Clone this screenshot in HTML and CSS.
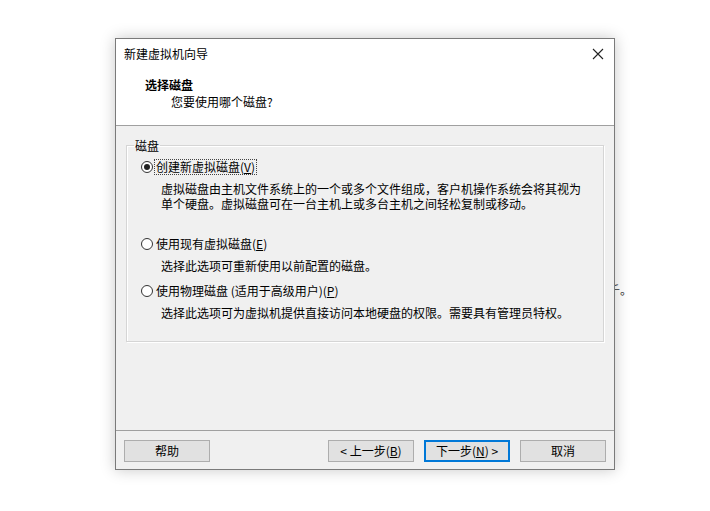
FILE: index.html
```html
<!DOCTYPE html>
<html lang="zh-CN">
<head>
<meta charset="utf-8">
<title>新建虚拟机向导</title>
<link rel="stylesheet" href="styles.css">
</head>
<body>
<div class="desktop">
  <div class="bgtext">千。</div>
  <div class="dialog">
    <div class="head">
      <div class="titlebar">
        <span class="title">新建虚拟机向导</span>
        <svg class="close" width="12" height="12" viewBox="0 0 12 12"><path d="M1 1 L11 11 M11 1 L1 11" stroke="#222" stroke-width="1.1" fill="none"/></svg>
      </div>
      <div class="heading">选择磁盘</div>
      <div class="subheading">您要使用哪个磁盘?</div>
    </div>
    <div class="body">
      <fieldset class="group">
        <legend>磁盘</legend>
        <div class="option">
          <div class="radio-row"><span class="radio checked"></span><span class="label focus">创建新虚拟磁盘(<u>V</u>)</span></div>
          <div class="desc">虚拟磁盘由主机文件系统上的一个或多个文件组成，客户机操作系统会将其视为<br>单个硬盘。虚拟磁盘可在一台主机上或多台主机之间轻松复制或移动。</div>
        </div>
        <div class="option opt2">
          <div class="radio-row"><span class="radio"></span><span class="label">使用现有虚拟磁盘(<u>E</u>)</span></div>
          <div class="desc">选择此选项可重新使用以前配置的磁盘。</div>
        </div>
        <div class="option opt3">
          <div class="radio-row"><span class="radio"></span><span class="label">使用物理磁盘 (适用于高级用户)(<u>P</u>)</span></div>
          <div class="desc">选择此选项可为虚拟机提供直接访问本地硬盘的权限。需要具有管理员特权。</div>
        </div>
      </fieldset>
    </div>
    <div class="footer">
      <button class="btn">帮助</button>
      <div class="spacer"></div>
      <button class="btn">&lt; 上一步(<u>B</u>)</button>
      <button class="btn primary">下一步(<u>N</u>) &gt;</button>
      <button class="btn">取消</button>
    </div>
  </div>
</div>
</body>
</html>
```

FILE: styles.css
```css
* { box-sizing: border-box; }
html, body {
  margin: 0;
  padding: 0;
  background: #ffffff;
  width: 710px;
  height: 511px;
  overflow: hidden;
}
body {
  font-family: "Noto Sans CJK SC", "Microsoft YaHei", sans-serif;
  font-size: 12px;
  color: #000;
}
.desktop {
  position: relative;
  padding: 38px 0 0 115px;
}
.bgtext {
  position: absolute;
  left: 608px;
  top: 282px;
  font-size: 12px;
  line-height: 16px;
  color: #333;
}
.dialog {
  position: relative;
  width: 500px;
  border: 1px solid #7a7a7a;
  background: #f0f0f0;
  box-shadow: 0 0 14px rgba(0,0,0,0.22);
}
.head {
  background: #fff;
  height: 87px;
  border-bottom: 1px solid #a0a0a0;
}
.titlebar {
  height: 29px;
  display: flex;
  align-items: center;
  justify-content: space-between;
  padding: 0 10px 0 8px;
  line-height: 16px;
}
.close { display: block; }
.heading {
  margin: 9px 0 0 29px;
  font-weight: bold;
  line-height: 16px;
}
.subheading {
  margin: 1px 0 0 55px;
  line-height: 16px;
}
.body {
  height: 304px;
  padding: 12px 10px 0 10px;
}
.group {
  margin: 0;
  padding: 6px 10px 0 14px;
  height: 204px;
  border: 1px solid #d5d5d5;
  box-shadow: inset 1px 1px 0 #fff, 1px 1px 0 #fff;
  min-width: 0;
}
.group legend {
  padding: 0 1px;
  margin-left: -7px;
  line-height: 15px;
}
.radio-row {
  display: flex;
  align-items: center;
  height: 16px;
}
.radio {
  width: 12px;
  height: 12px;
  border: 1px solid #333;
  border-radius: 50%;
  background: #fff;
  margin-right: 1px;
  display: flex;
  align-items: center;
  justify-content: center;
  flex: none;
}
.radio.checked::after {
  content: "";
  width: 6px;
  height: 6px;
  border-radius: 50%;
  background: #222;
}
.label {
  line-height: 14px;
  padding: 0 1px;
  border: 1px solid transparent;
}
.label.focus { border: 1px dotted #444; }
.desc {
  margin: 6px 0 0 20px;
  line-height: 15px;
}
.opt2 { margin-top: 25px; }
.opt3 { margin-top: 10px; }
.footer {
  border-top: 1px solid #a0a0a0;
  height: 39px;
  display: flex;
  align-items: flex-start;
  padding: 9px 8px 0 8px;
  gap: 10px;
}
.spacer { flex: 1; }
.btn {
  width: 86px;
  height: 22px;
  border: 1px solid #adadad;
  background: #e1e1e1;
  font-family: inherit;
  font-size: 12px;
  color: #000;
  padding: 0;
  line-height: 18px;
}
.btn.primary {
  border: 2px solid #0078d7;
}
```
